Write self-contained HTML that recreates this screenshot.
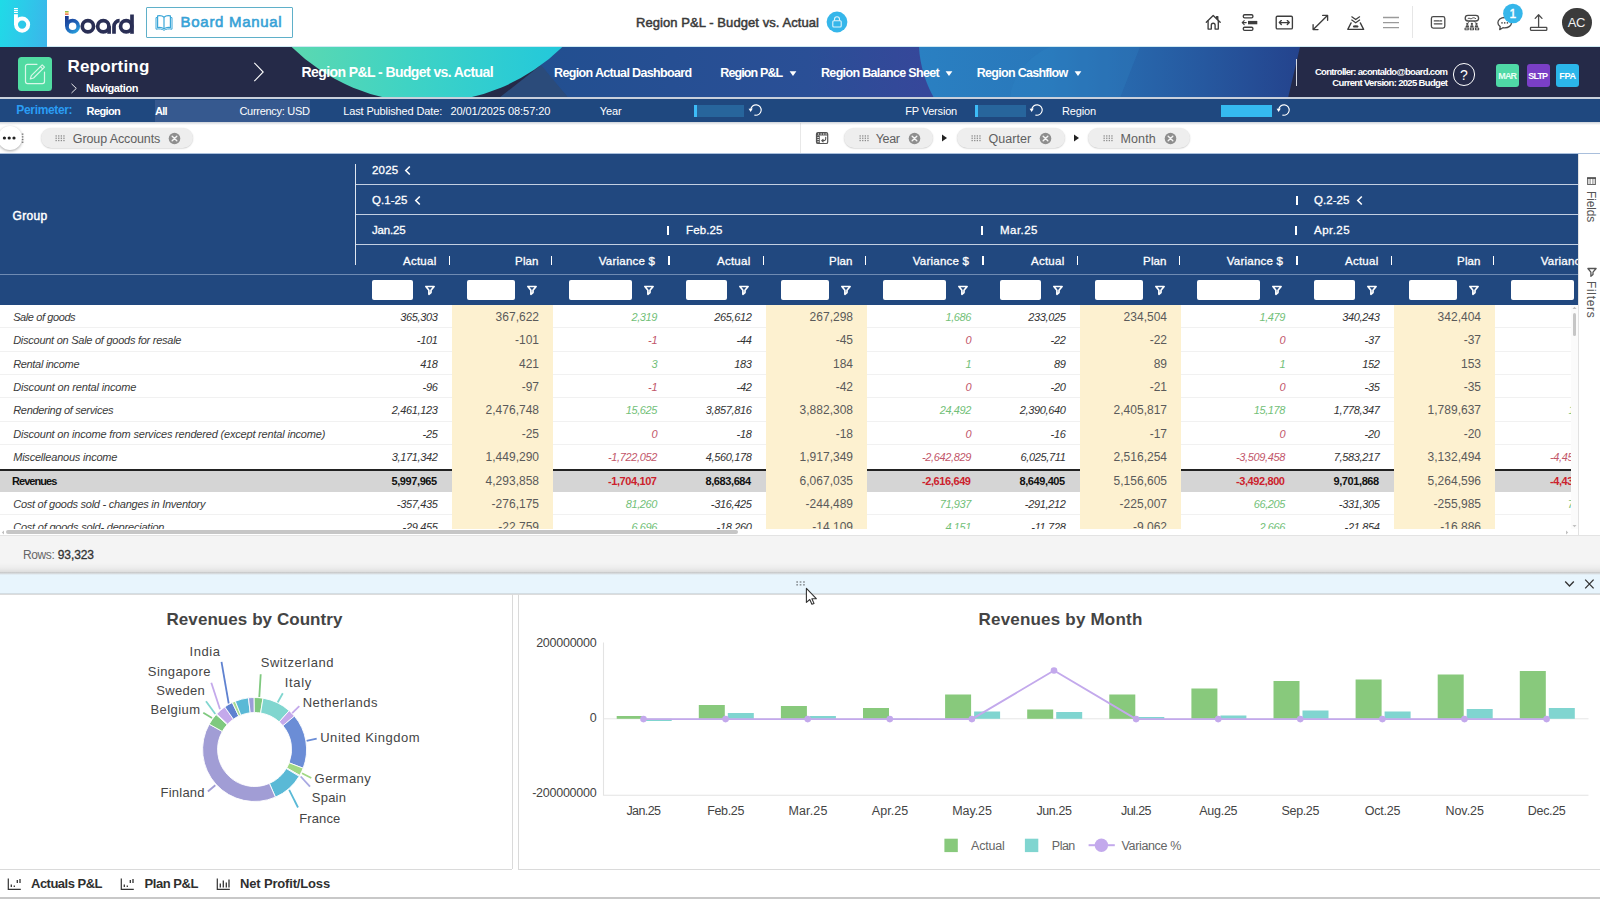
<!DOCTYPE html>
<html>
<head>
<meta charset="utf-8">
<title>Region P&amp;L - Budget vs. Actual</title>
<style>
*{box-sizing:border-box;margin:0;padding:0}
html,body{width:1600px;height:900px;overflow:hidden;background:#fff;font-family:"Liberation Sans",sans-serif;}
#root{position:relative;width:1600px;height:900px;overflow:hidden;background:#fff}
.abs{position:absolute}
.t{position:absolute;white-space:nowrap;line-height:1}
/* top bar */
#topbar{position:absolute;left:0;top:0;width:1600px;height:47px;background:#fff}
#logoSq{position:absolute;left:0;top:0;width:47px;height:47px;background:linear-gradient(100deg,#1fdbe7 0%,#2ccbe9 45%,#3cb4ea 100%)}
/* nav bar */
#nav{position:absolute;left:0;top:47px;width:1600px;height:51px;background:#252a48;overflow:hidden}
#navline{position:absolute;left:0;top:97px;width:1600px;height:2px;background:#c9d0dc}
/* perimeter */
#perim{position:absolute;left:0;top:99px;width:1600px;height:23px;background:#1f487f}
/* toolbar */
#toolbar{position:absolute;left:0;top:122px;width:1600px;height:32px;background:#fff}
/* table */
#thead{position:absolute;left:0;top:154px;width:1578px;height:150.600px;background:#21487f}
#tbody{position:absolute;left:0;top:305px;width:1578px;height:224px;background:#fff;overflow:hidden}
#side{position:absolute;left:1578px;top:154px;width:22px;height:382px;background:#fff}
#tfoot{position:absolute;left:0;top:536px;width:1600px;height:37px;background:#f4f4f4}
#divider{position:absolute;left:0;top:573px;width:1600px;height:21px;background:#e8f5fd}
#charts{position:absolute;left:0;top:594px;width:1600px;height:276px;background:#fff}
#tabs{position:absolute;left:0;top:870px;width:1600px;height:30px;background:#fff}
</style>
</head>
<body>
<div id="root">
<div id="topbar">
<div id="logoSq"></div>
<svg class="abs" style="left:0;top:0" width="47" height="47" viewBox="0 0 47 47">
<g fill="none" stroke="#fff" stroke-linecap="butt">
<circle cx="22.1" cy="24.6" r="6.1" stroke-width="3.9"/>
<path d="M15.95 14.2V25" stroke-width="3.9"/>
<path d="M14 8.6h3.9M14 10.6h3.9M14 12.5h3.9" stroke-width="1.1"/>
</g></svg>
<svg class="abs" style="left:60px;top:6px" width="80" height="34" viewBox="60 6 80 34">
<defs><linearGradient id="bg1" gradientUnits="userSpaceOnUse" x1="65" y1="15" x2="78" y2="34"><stop offset="0" stop-color="#1b2f86"/><stop offset="0.55" stop-color="#1f63b8"/><stop offset="1" stop-color="#2aaee6"/></linearGradient></defs>
<rect x="65" y="11" width="3.6" height="1.2" fill="#8cc152"/><rect x="65" y="12.4" width="3.6" height="1.1" fill="#f5b731"/><rect x="65" y="13.7" width="3.6" height="1.1" fill="#e9573f"/>
<g fill="none" stroke-width="3.7">
<path d="M66.85 16V26.3" stroke="url(#bg1)"/>
<circle cx="72.6" cy="26.3" r="5.65" stroke="url(#bg1)"/>
<circle cx="87.9" cy="26.3" r="5.65" stroke="#2a2f55"/>
<circle cx="103.3" cy="26.3" r="5.65" stroke="#2a2f55"/>
<path d="M109.1 26.3V33.8" stroke="#2a2f55"/>
<path d="M114 33.8V26.6a5.6 5.6 0 0 1 5.6-5.9" stroke="#2a2f55"/>
<circle cx="126.2" cy="26.3" r="5.65" stroke="#2a2f55"/>
<path d="M132 14.5V33.8" stroke="#2a2f55"/>
</g></svg>
<div class="abs" style="left:146px;top:6.5px;width:146.5px;height:31px;border:1.5px solid #5fb0c9;border-radius:1px;background:#fff"></div>
<svg class="abs" style="left:154px;top:13px" width="20" height="19" viewBox="0 0 20 19">
<g fill="none" stroke="#3aa6d8" stroke-width="1.2" stroke-linejoin="round">
<path d="M10 4.2C8.3 2.7 6 2.4 3.6 2.9V14.6C6 14.1 8.3 14.5 10 15.9C11.700 14.5 14 14.1 16.400 14.6V2.9C14 2.4 11.700 2.7 10 4.2Z"/>
<path d="M10 4.200V15.900"/>
<path d="M3.600 4.600H2V16.200C5 15.600 8 15.900 10 17.300C12 15.900 15 15.600 18 16.200V4.600H16.400" stroke-width="1"/>
</g></svg>
<span class="t" style="left:180.60px;top:14.00px;font-size:15px;color:#37a2d6;letter-spacing:0.699px;-webkit-text-stroke:0.600px #37a2d6;">Board Manual</span>
<span class="t" style="left:636.00px;top:16.00px;font-size:13px;color:#3a3a3a;letter-spacing:0.070px;-webkit-text-stroke:0.500px #3a3a3a;">Region P&amp;L - Budget vs. Actual</span>
<svg class="abs" style="left:826px;top:11px" width="22" height="22" viewBox="0 0 22 22">
<circle cx="11" cy="11" r="10.4" fill="#35b6ea"/>
<g fill="none" stroke="#dff4fc" stroke-width="1.1"><rect x="6.800" y="9.800" width="8.400" height="6.200" rx="1"/><path d="M8.500 9.800V8.200a2.500 2.500 0 0 1 5 0V9.800"/></g></svg>
<svg class="abs" style="left:1200px;top:8px" width="210" height="30" viewBox="1200 8 210 30">
<g fill="none" stroke="#3d3d3d" stroke-width="1.35" stroke-linejoin="round" stroke-linecap="round">
<!-- home -->
<path d="M1206.300 22.300L1213.200 15.400L1220.200 22.300"/><path d="M1208.100 21V29.100H1211.300V25.200a1.900 1.900 0 0 1 3.800 0V29.100H1218.300V21"/><path d="M1216.600 18.600V16.600H1217.800V19.800"/>
<!-- bars -->
<rect x="1243.300" y="14.700" width="9.600" height="3.200" rx="1.300"/><rect x="1243.300" y="27.200" width="9.600" height="3.200" rx="1.300"/>
<path d="M1248 22.600H1257.300" stroke-width="3.400" stroke-linecap="butt"/><path d="M1246.200 22.600H1242.200M1244.200 20.600L1242.200 22.600L1244.200 24.600" stroke-width="1.100"/>
<!-- box arrows -->
<rect x="1276.200" y="16.300" width="16.200" height="12.600" rx="1.200"/><path d="M1279.300 22.600H1289.300M1281.300 20.600L1279.300 22.600L1281.300 24.600M1287.300 20.600L1289.300 22.600L1287.300 24.600"/>
<!-- diag -->
<path d="M1313.300 29.400L1327.400 15.600M1322.700 15.400H1327.600V20.300M1313.100 24.700V29.600H1318"/>
<!-- layer -->
<path d="M1351.800 16.800L1355.700 19.600L1359.600 16.800M1351.800 20L1355.700 22.800L1359.600 20" stroke-width="1.200"/>
<path d="M1351.100 22.900L1347.800 29.400H1363.600L1360.300 22.900"/><ellipse cx="1355.700" cy="26.400" rx="2.900" ry="1.200" fill="#3d3d3d" stroke="none"/>
</g>
<g stroke="#9a9a9a" stroke-width="1.300"><path d="M1383 17.500H1399M1383 22.600H1399M1383 27.600H1399"/></g>
</svg>
<div class="abs" style="left:1412px;top:6px;width:1px;height:32px;background:#e6e6e6;"></div>
<svg class="abs" style="left:1425px;top:2px" width="130" height="36" viewBox="1425 2 130 36">
<g fill="none" stroke="#4a4a4a" stroke-width="1.300" stroke-linejoin="round" stroke-linecap="round">
<!-- card -->
<rect x="1431.400" y="16.700" width="13.400" height="11.400" rx="1.800"/><path d="M1434.300 20.900H1438.800M1440 20.900H1441.600M1434.300 23.800H1441.900" stroke-width="1.300"/>
<!-- people -->
<rect x="1465.200" y="15.400" width="13.400" height="5.600" rx="2.800"/><path d="M1468 18.500c1.300-1.400 2.500 1.100 3.800 0s2.500-.9 3.800 0" stroke-width="1"/>
<path d="M1469.600 21.200l-1.300 1.300M1474 21.200l1.300 1.300" stroke-width="0.900"/>
<g fill="#4a4a4a" stroke="none">
<circle cx="1467.300" cy="23.900" r="1.150"/><circle cx="1471.900" cy="23.900" r="1.150"/><circle cx="1476.500" cy="23.900" r="1.150"/>
<path d="M1465.300 27.500l.8-2.200h2.400l.8 2.200ZM1469.900 27.500l.8-2.200h2.400l.8 2.200ZM1474.500 27.500l.8-2.200h2.400l.8 2.200Z"/>
<rect x="1464.500" y="27.700" width="4.300" height="2.500" rx="0.400"/><rect x="1469.700" y="27.700" width="4.300" height="2.500" rx="0.400"/><rect x="1474.900" y="27.700" width="4.300" height="2.500" rx="0.400"/>
</g>
<g fill="#fff" stroke="none"><rect x="1465.600" y="28.500" width="2.100" height="0.900"/><rect x="1470.800" y="28.500" width="2.100" height="0.900"/><rect x="1476" y="28.500" width="2.100" height="0.900"/></g>
<!-- chat -->
<path d="M1504.700 17.500c-4 0-6.800 2.300-6.800 5.200c0 1.600.9 3 2.300 3.900l-.5 3.100l3.200-2c.6.100 1.200.2 1.800.2c3.900 0 6.800-2.300 6.800-5.200S1508.600 17.500 1504.700 17.500Z"/>
<!-- upload -->
<rect x="1530.500" y="27.400" width="16.300" height="2.900" rx="0.500"/><path d="M1538.600 26.500V15M1535.200 18.400L1538.600 14.800L1542 18.400"/>
</g>
<g fill="#4a4a4a"><circle cx="1502" cy="22.900" r="0.800"/><circle cx="1504.700" cy="22.900" r="0.800"/><circle cx="1507.400" cy="22.900" r="0.800"/></g>
<circle cx="1512.900" cy="13.500" r="9.800" fill="#35b6ea"/>
</svg>
<span class="t" style="left:1509.56px;top:8.00px;font-size:12px;color:#fff;-webkit-text-stroke:0.400px #fff;">1</span>
<div class="abs" style="left:1562px;top:7.500px;width:29.500px;height:29.500px;border-radius:50%;background:#3b3b3b"></div>
<span class="t" style="left:1567.83px;top:16.00px;font-size:13px;color:#f2f2f2;letter-spacing:-0.531px;">AC</span>
<div class="abs" style="left:47px;top:46px;width:1553px;height:1px;background:#cfeaf3;"></div>
</div>
<div id="nav">
<svg class="abs" style="left:0;top:0" width="1600" height="51" viewBox="0 47 1600 51">
<defs>
<linearGradient id="ng1" x1="0" y1="0" x2="1" y2="0"><stop offset="0" stop-color="#6adba6"/><stop offset="0.45" stop-color="#3fd3c4"/><stop offset="1" stop-color="#18c4e4"/></linearGradient>
<linearGradient id="ng2" gradientUnits="userSpaceOnUse" x1="535" y1="0" x2="925" y2="0"><stop offset="0" stop-color="#224f90"/><stop offset="0.7" stop-color="#2a4f96"/><stop offset="1" stop-color="#36479a"/></linearGradient>
<linearGradient id="ng3" x1="0" y1="0" x2="1" y2="0"><stop offset="0" stop-color="#2a80c2"/><stop offset="0.35" stop-color="#2977ba"/><stop offset="0.75" stop-color="#26589f"/><stop offset="1" stop-color="#24438d"/></linearGradient>
</defs>
<rect x="0" y="47" width="1600" height="51" fill="#252a48"/>
<path d="M535 47H940V98H568L538 64Z" fill="url(#ng2)"/>
<path d="M499 98L541 65L568.500 98Z" fill="#2b4b7a"/>
<path d="M919 47H1300L1288 98H934C926 84 920 66 919 47Z" fill="url(#ng3)"/>
<path d="M1010 98C1012 75 1030 55 1050 47H1140L1120 98Z" fill="#2e86c6" opacity="0.250"/>
<circle cx="427" cy="-90.600" r="193" fill="url(#ng1)"/>
</svg>
<div class="abs" style="left:18px;top:10px;width:34px;height:34px;border-radius:3.500px;background:#51dba2"></div>
<svg class="abs" style="left:18px;top:10px" width="34" height="34" viewBox="0 0 34 34">
<g fill="none" stroke="#d8f7e8" stroke-width="1.200" stroke-linejoin="round" stroke-linecap="round">
<path d="M19 7.300H9.500a2 2 0 0 0-2 2V24.600a2 2 0 0 0 2 2H24.500a2 2 0 0 0 2-2V15"/>
<path d="M24.200 7.800l2.300 2.300L15.600 21l-3.300 1l1-3.300Z"/><path d="M22.400 9.600l2.300 2.300"/>
</g></svg>
<span class="t" style="left:67.50px;top:11.00px;font-size:17px;color:#fff;font-weight:bold;letter-spacing:0.191px;">Reporting</span>
<span class="t" style="left:86.00px;top:36.00px;font-size:11px;color:#fff;font-weight:bold;letter-spacing:-0.423px;">Navigation</span>
<svg class="abs" style="left:68px;top:34px" width="12" height="14" viewBox="0 0 12 14"><path d="M3.500 2.800L8.300 7.400L3.500 12" fill="none" stroke="#fff" stroke-width="0.900"/></svg>
<svg class="abs" style="left:250px;top:12px" width="18" height="26" viewBox="0 0 18 26"><path d="M4.300 3.800L13.200 13L4.300 22.200" fill="none" stroke="#fff" stroke-width="1.100"/></svg>
<span class="t" style="left:301.60px;top:18.00px;font-size:14px;color:#fff;font-weight:bold;letter-spacing:-0.592px;">Region P&amp;L - Budget vs. Actual</span>
<span class="t" style="left:554.00px;top:20.00px;font-size:12.5px;color:#fff;font-weight:bold;letter-spacing:-0.641px;">Region Actual Dashboard</span>
<span class="t" style="left:720.30px;top:20.00px;font-size:12.5px;color:#fff;font-weight:bold;letter-spacing:-0.884px;">Region P&amp;L</span>
<span class="t" style="left:821.00px;top:20.00px;font-size:12.5px;color:#fff;font-weight:bold;letter-spacing:-0.665px;">Region Balance Sheet</span>
<span class="t" style="left:976.80px;top:20.00px;font-size:12.5px;color:#fff;font-weight:bold;letter-spacing:-0.714px;">Region Cashflow</span>
<svg class="abs" style="left:788.7px;top:22.5px" width="8" height="7" viewBox="0 0 8 7"><path d="M0.600 1.200H7.400L4 5.900Z" fill="#fff"/></svg>
<svg class="abs" style="left:944.8px;top:22.5px" width="8" height="7" viewBox="0 0 8 7"><path d="M0.600 1.200H7.400L4 5.900Z" fill="#fff"/></svg>
<svg class="abs" style="left:1074px;top:22.5px" width="8" height="7" viewBox="0 0 8 7"><path d="M0.600 1.200H7.400L4 5.900Z" fill="#fff"/></svg>
<div class="abs" style="left:1296px;top:12px;width:1.2px;height:27px;background:#d5d8e2;"></div>
<span class="t" style="left:1314.91px;top:20.00px;font-size:9.5px;color:#fff;font-weight:bold;letter-spacing:-0.693px;">Controller: acontaldo@board.com</span>
<span class="t" style="left:1332.34px;top:31.00px;font-size:9.5px;color:#fff;font-weight:bold;letter-spacing:-0.663px;">Current Version: 2025 Budget</span>
<div class="abs" style="left:1452.600px;top:16.200px;width:22.800px;height:22.800px;border-radius:50%;border:1.200px solid #fff"></div>
<span class="t" style="left:1460.10px;top:21.00px;font-size:14px;color:#fff;">?</span>
<div class="abs" style="left:1496px;top:16.600px;width:23.300px;height:23px;border-radius:3px;background:#4fd9a6"></div>
<span class="t" style="left:1498.37px;top:25.00px;font-size:9px;color:#e6fff3;font-weight:bold;letter-spacing:-0.967px;">MAR</span>
<div class="abs" style="left:1526.5px;top:16.600px;width:23.300px;height:23px;border-radius:3px;background:#7a3fc6"></div>
<span class="t" style="left:1528.19px;top:25.00px;font-size:9px;color:#fff;font-weight:bold;letter-spacing:-0.811px;">SLTP</span>
<div class="abs" style="left:1556px;top:16.600px;width:23.300px;height:23px;border-radius:3px;background:#2bb6ea"></div>
<span class="t" style="left:1559.23px;top:25.00px;font-size:9px;color:#fff;font-weight:bold;letter-spacing:-0.248px;">FPA</span>
</div>
<div id="navline"></div>
<div id="perim">
<div class="abs" style="left:154.5px;top:0.5px;width:155.5px;height:22px;background:#36598f;"></div>
<span class="t" style="left:16.30px;top:5.00px;font-size:12px;color:#2a9df4;font-weight:bold;letter-spacing:-0.338px;">Perimeter:</span>
<span class="t" style="left:86.60px;top:7.00px;font-size:11px;color:#fff;font-weight:bold;letter-spacing:-0.614px;">Region</span>
<span class="t" style="left:155.00px;top:7.00px;font-size:11px;color:#fff;font-weight:bold;letter-spacing:-0.754px;">All</span>
<span class="t" style="left:239.40px;top:7.00px;font-size:11px;color:#fff;letter-spacing:-0.282px;">Currency: USD</span>
<span class="t" style="left:343.20px;top:7.00px;font-size:11px;color:#fff;letter-spacing:-0.126px;">Last Published Date:</span>
<span class="t" style="left:450.40px;top:7.00px;font-size:11px;color:#fff;letter-spacing:-0.049px;">20/01/2025 08:57:20</span>
<span class="t" style="left:599.70px;top:7.00px;font-size:11px;color:#fff;letter-spacing:-0.059px;">Year</span>
<span class="t" style="left:905.30px;top:7.00px;font-size:11px;color:#fff;letter-spacing:-0.191px;">FP Version</span>
<span class="t" style="left:1062.00px;top:7.00px;font-size:11px;color:#fff;letter-spacing:-0.143px;">Region</span>
<div class="abs" style="left:693.7px;top:5.6px;width:50.5px;height:12.2px;background:#27659c;"></div>
<div class="abs" style="left:693.7px;top:5.6px;width:3.3px;height:12.2px;background:#3dbcf8;"></div>
<div class="abs" style="left:974.6px;top:5.6px;width:51.4px;height:12.2px;background:#27659c;"></div>
<div class="abs" style="left:974.6px;top:5.6px;width:3.3px;height:12.2px;background:#3dbcf8;"></div>
<div class="abs" style="left:1220.8px;top:5.6px;width:51.4px;height:12.2px;background:#35baf0;"></div>
<svg class="abs" style="left:748px;top:3.299999999999997px" width="16" height="16" viewBox="-8 -8 16 16"><path d="M-5.200 -0.300A5.200 5.200 0 1 1 -1.200 5.100" fill="none" stroke="#fff" stroke-width="1.100" stroke-linecap="round"/><path d="M-7.400 -1.200L-3.200 -1.600L-5.400 1.900Z" fill="#fff"/></svg>
<svg class="abs" style="left:1029.4px;top:3.299999999999997px" width="16" height="16" viewBox="-8 -8 16 16"><path d="M-5.200 -0.300A5.200 5.200 0 1 1 -1.200 5.100" fill="none" stroke="#fff" stroke-width="1.100" stroke-linecap="round"/><path d="M-7.400 -1.200L-3.200 -1.600L-5.400 1.900Z" fill="#fff"/></svg>
<svg class="abs" style="left:1276px;top:3.299999999999997px" width="16" height="16" viewBox="-8 -8 16 16"><path d="M-5.200 -0.300A5.200 5.200 0 1 1 -1.200 5.100" fill="none" stroke="#fff" stroke-width="1.100" stroke-linecap="round"/><path d="M-7.400 -1.200L-3.200 -1.600L-5.400 1.900Z" fill="#fff"/></svg>
</div>
<div id="toolbar">
<div class="abs" style="left:41.2px;top:6.300000000000011px;width:151.8px;height:19.800px;border-radius:10px;background:#eeeeee;box-shadow:0 0.500px 1.500px rgba(0,0,0,0.220)"></div>
<svg class="abs" style="left:55.0px;top:12.699999999999989px" width="11" height="7" viewBox="0 0 11 7"><g fill="#8a8a8a"><rect x="0.5" y="0.3" width="1.300" height="1.300"/><rect x="3.1" y="0.3" width="1.300" height="1.300"/><rect x="5.7" y="0.3" width="1.300" height="1.300"/><rect x="8.3" y="0.3" width="1.300" height="1.300"/><rect x="0.5" y="2.6" width="1.300" height="1.300"/><rect x="3.1" y="2.6" width="1.300" height="1.300"/><rect x="5.7" y="2.6" width="1.300" height="1.300"/><rect x="8.3" y="2.6" width="1.300" height="1.300"/><rect x="0.5" y="4.9" width="1.300" height="1.300"/><rect x="3.1" y="4.9" width="1.300" height="1.300"/><rect x="5.7" y="4.9" width="1.300" height="1.300"/><rect x="8.3" y="4.9" width="1.300" height="1.300"/></g></svg>
<span class="t" style="left:72.80px;top:11.00px;font-size:12.5px;color:#606060;letter-spacing:-0.111px;">Group Accounts</span>
<svg class="abs" style="left:167.8px;top:9.699999999999989px" width="13" height="13" viewBox="-6.500 -6.500 13 13"><circle r="5.800" fill="#8e8e8e"/><path d="M-2.300 -2.300L2.300 2.300M2.300 -2.300L-2.300 2.300" stroke="#f4f4f4" stroke-width="1.400" stroke-linecap="round"/></svg>
<div class="abs" style="left:799.5px;top:1px;width:1px;height:31px;background:#e8e8e8;"></div>
<div class="abs" style="left:-2.500px;top:3.800px;width:24.500px;height:24.500px;border-radius:50%;background:#fff;box-shadow:0 1px 3px rgba(0,0,0,0.350)"></div>
<svg class="abs" style="left:2px;top:12px" width="16" height="8" viewBox="0 0 16 8"><g fill="#222"><circle cx="2.400" cy="4" r="1.600"/><circle cx="7.200" cy="4" r="1.600"/><circle cx="12" cy="4" r="1.600"/></g></svg>
<svg class="abs" style="left:21px;top:11px" width="4" height="11" viewBox="0 0 4 11"><g fill="#777"><rect x="0.800" y="0.500" width="1.600" height="1.300"/><rect x="0.800" y="3.200" width="1.600" height="1.300"/><rect x="0.800" y="5.900" width="1.600" height="1.300"/><rect x="0.800" y="8.600" width="1.600" height="1.300"/></g></svg>
<svg class="abs" style="left:815px;top:9px" width="14" height="14" viewBox="815 131 14 14"><rect x="816.500" y="132.500" width="11.200" height="11" rx="1.600" fill="#fff" stroke="#555" stroke-width="1.200"/>
<path d="M816.500 134.200a1.700 1.700 0 0 1 1.700-1.700h7.800a1.700 1.700 0 0 1 1.700 1.700v1.300h-11.200Z" fill="#555"/>
<path d="M816.500 135.500h3.300v8h-1.600a1.700 1.700 0 0 1-1.700-1.700Z" fill="#555"/>
<g fill="#fff"><rect x="818" y="133.500" width="1" height="1"/><rect x="820.500" y="133.500" width="1.300" height="1"/><rect x="823" y="133.500" width="1.300" height="1"/><rect x="825.500" y="133.500" width="1.300" height="1"/>
<rect x="817.300" y="137" width="1.800" height="0.800"/><rect x="817.300" y="139.200" width="1.800" height="0.800"/><rect x="817.300" y="141.400" width="1.800" height="0.800"/></g>
<path d="M825.700 137.300v1.500a1.800 1.800 0 0 1-1.800 1.800h-2.100M823.100 139.300l-1.400 1.300l1.400 1.300" fill="none" stroke="#555" stroke-width="1.100" stroke-linecap="round" stroke-linejoin="round"/></svg>
<div class="abs" style="left:843.8px;top:6.300000000000011px;width:89.70000000000005px;height:19.800px;border-radius:10px;background:#eeeeee;box-shadow:0 0.500px 1.500px rgba(0,0,0,0.220)"></div>
<svg class="abs" style="left:858.5px;top:12.699999999999989px" width="11" height="7" viewBox="0 0 11 7"><g fill="#8a8a8a"><rect x="0.5" y="0.3" width="1.300" height="1.300"/><rect x="3.1" y="0.3" width="1.300" height="1.300"/><rect x="5.7" y="0.3" width="1.300" height="1.300"/><rect x="8.3" y="0.3" width="1.300" height="1.300"/><rect x="0.5" y="2.6" width="1.300" height="1.300"/><rect x="3.1" y="2.6" width="1.300" height="1.300"/><rect x="5.7" y="2.6" width="1.300" height="1.300"/><rect x="8.3" y="2.6" width="1.300" height="1.300"/><rect x="0.5" y="4.9" width="1.300" height="1.300"/><rect x="3.1" y="4.9" width="1.300" height="1.300"/><rect x="5.7" y="4.9" width="1.300" height="1.300"/><rect x="8.3" y="4.9" width="1.300" height="1.300"/></g></svg>
<span class="t" style="left:875.70px;top:11.00px;font-size:12.5px;color:#606060;letter-spacing:-0.316px;">Year</span>
<svg class="abs" style="left:907.7px;top:9.699999999999989px" width="13" height="13" viewBox="-6.500 -6.500 13 13"><circle r="5.800" fill="#8e8e8e"/><path d="M-2.300 -2.300L2.300 2.300M2.300 -2.300L-2.300 2.300" stroke="#f4f4f4" stroke-width="1.400" stroke-linecap="round"/></svg>
<div class="abs" style="left:956.8px;top:6.300000000000011px;width:107.79999999999995px;height:19.800px;border-radius:10px;background:#eeeeee;box-shadow:0 0.500px 1.500px rgba(0,0,0,0.220)"></div>
<svg class="abs" style="left:970.9px;top:12.699999999999989px" width="11" height="7" viewBox="0 0 11 7"><g fill="#8a8a8a"><rect x="0.5" y="0.3" width="1.300" height="1.300"/><rect x="3.1" y="0.3" width="1.300" height="1.300"/><rect x="5.7" y="0.3" width="1.300" height="1.300"/><rect x="8.3" y="0.3" width="1.300" height="1.300"/><rect x="0.5" y="2.6" width="1.300" height="1.300"/><rect x="3.1" y="2.6" width="1.300" height="1.300"/><rect x="5.7" y="2.6" width="1.300" height="1.300"/><rect x="8.3" y="2.6" width="1.300" height="1.300"/><rect x="0.5" y="4.9" width="1.300" height="1.300"/><rect x="3.1" y="4.9" width="1.300" height="1.300"/><rect x="5.7" y="4.9" width="1.300" height="1.300"/><rect x="8.3" y="4.9" width="1.300" height="1.300"/></g></svg>
<span class="t" style="left:988.50px;top:11.00px;font-size:12.5px;color:#606060;letter-spacing:0.030px;">Quarter</span>
<svg class="abs" style="left:1039.2px;top:9.699999999999989px" width="13" height="13" viewBox="-6.500 -6.500 13 13"><circle r="5.800" fill="#8e8e8e"/><path d="M-2.300 -2.300L2.300 2.300M2.300 -2.300L-2.300 2.300" stroke="#f4f4f4" stroke-width="1.400" stroke-linecap="round"/></svg>
<div class="abs" style="left:1088px;top:6.300000000000011px;width:101.79999999999995px;height:19.800px;border-radius:10px;background:#eeeeee;box-shadow:0 0.500px 1.500px rgba(0,0,0,0.220)"></div>
<svg class="abs" style="left:1102.5px;top:12.699999999999989px" width="11" height="7" viewBox="0 0 11 7"><g fill="#8a8a8a"><rect x="0.5" y="0.3" width="1.300" height="1.300"/><rect x="3.1" y="0.3" width="1.300" height="1.300"/><rect x="5.7" y="0.3" width="1.300" height="1.300"/><rect x="8.3" y="0.3" width="1.300" height="1.300"/><rect x="0.5" y="2.6" width="1.300" height="1.300"/><rect x="3.1" y="2.6" width="1.300" height="1.300"/><rect x="5.7" y="2.6" width="1.300" height="1.300"/><rect x="8.3" y="2.6" width="1.300" height="1.300"/><rect x="0.5" y="4.9" width="1.300" height="1.300"/><rect x="3.1" y="4.9" width="1.300" height="1.300"/><rect x="5.7" y="4.9" width="1.300" height="1.300"/><rect x="8.3" y="4.9" width="1.300" height="1.300"/></g></svg>
<span class="t" style="left:1120.50px;top:11.00px;font-size:12.5px;color:#606060;letter-spacing:0.110px;">Month</span>
<svg class="abs" style="left:1164.0px;top:9.699999999999989px" width="13" height="13" viewBox="-6.500 -6.500 13 13"><circle r="5.800" fill="#8e8e8e"/><path d="M-2.300 -2.300L2.300 2.300M2.300 -2.300L-2.300 2.300" stroke="#f4f4f4" stroke-width="1.400" stroke-linecap="round"/></svg>
<svg class="abs" style="left:941.1px;top:12px" width="7" height="8" viewBox="0 0 7 8"><path d="M1 0.600L6 4L1 7.400Z" fill="#222"/></svg>
<svg class="abs" style="left:1072.7px;top:12px" width="7" height="8" viewBox="0 0 7 8"><path d="M1 0.600L6 4L1 7.400Z" fill="#222"/></svg>
<div class="abs" style="left:0;top:0;width:1600px;height:2.500px;background:linear-gradient(rgba(30,50,80,0.220),rgba(30,50,80,0))"></div>
<div class="abs" style="left:0px;top:31.4px;width:1600px;height:0.6px;background:#a9bfdc;"></div>
</div>
<div id="thead">
<div class="abs" style="left:355px;top:10px;width:1.2px;height:101px;background:#dfe6f0;"></div>
<div class="abs" style="left:356px;top:30px;width:1222px;height:1px;background:#c3cfe2;"></div>
<div class="abs" style="left:356px;top:60px;width:1222px;height:1px;background:#c3cfe2;"></div>
<div class="abs" style="left:356px;top:90px;width:1222px;height:1px;background:#c3cfe2;"></div>
<div class="abs" style="left:0px;top:120px;width:1578px;height:1px;background:#6f8bb3;"></div>
<span class="t" style="left:12.50px;top:56.00px;font-size:12px;color:#fff;letter-spacing:0.328px;-webkit-text-stroke:0.450px #fff;">Group</span>
<span class="t" style="left:372.00px;top:11.00px;font-size:11.5px;color:#fff;letter-spacing:0.202px;-webkit-text-stroke:0.300px #fff;">2025</span>
<svg class="abs" style="left:403px;top:10.500px" width="9" height="11" viewBox="0 0 9 11"><path d="M6.800 1.500L2.800 5.500L6.800 9.500" fill="none" stroke="#fff" stroke-width="1.600"/></svg>
<span class="t" style="left:372.00px;top:41.00px;font-size:11.5px;color:#fff;letter-spacing:0.038px;-webkit-text-stroke:0.300px #fff;">Q.1-25</span>
<svg class="abs" style="left:412.500px;top:40.500px" width="9" height="11" viewBox="0 0 9 11"><path d="M6.800 1.500L2.800 5.500L6.800 9.500" fill="none" stroke="#fff" stroke-width="1.600"/></svg>
<span class="t" style="left:1314.00px;top:41.00px;font-size:11.5px;color:#fff;letter-spacing:0.038px;-webkit-text-stroke:0.300px #fff;">Q.2-25</span>
<svg class="abs" style="left:1354.500px;top:40.500px" width="9" height="11" viewBox="0 0 9 11"><path d="M6.800 1.500L2.800 5.500L6.800 9.500" fill="none" stroke="#fff" stroke-width="1.600"/></svg>
<div class="abs" style="left:1296.3px;top:42px;width:1.6px;height:8.5px;background:#fff;"></div>
<span class="t" style="left:372.00px;top:71.00px;font-size:11.5px;color:#fff;letter-spacing:-0.172px;-webkit-text-stroke:0.300px #fff;">Jan.25</span>
<span class="t" style="left:402.96px;top:102.00px;font-size:11.5px;color:#fff;letter-spacing:0.255px;-webkit-text-stroke:0.300px #fff;">Actual</span>
<span class="t" style="left:515.12px;top:102.00px;font-size:11.5px;color:#fff;letter-spacing:0.117px;-webkit-text-stroke:0.300px #fff;">Plan</span>
<span class="t" style="left:598.74px;top:102.00px;font-size:11.5px;color:#fff;letter-spacing:0.236px;-webkit-text-stroke:0.300px #fff;">Variance $</span>
<div class="abs" style="left:448.8px;top:102px;width:1.6px;height:8.5px;background:#fff;"></div>
<div class="abs" style="left:550.7px;top:102px;width:1.6px;height:8.5px;background:#fff;"></div>
<div class="abs" style="left:668.2px;top:102px;width:1.6px;height:8.5px;background:#fff;"></div>
<div class="abs" style="left:372px;top:126px;width:40.69999999999999px;height:19.600px;background:#fff;border-radius:2px"></div>
<svg class="abs" style="left:424px;top:129.60000000000002px" width="12" height="12" viewBox="-6 -6 12 12"><path d="M-4.100 -3.500H4.100L1 0.200V2.600L-1.100 4.300V0.200Z" fill="none" stroke="#fff" stroke-width="1.700" stroke-linejoin="round"/></svg>
<div class="abs" style="left:466.5px;top:126px;width:48.5px;height:19.600px;background:#fff;border-radius:2px"></div>
<svg class="abs" style="left:526px;top:129.60000000000002px" width="12" height="12" viewBox="-6 -6 12 12"><path d="M-4.100 -3.500H4.100L1 0.200V2.600L-1.100 4.300V0.200Z" fill="none" stroke="#fff" stroke-width="1.700" stroke-linejoin="round"/></svg>
<div class="abs" style="left:569px;top:126px;width:63px;height:19.600px;background:#fff;border-radius:2px"></div>
<svg class="abs" style="left:643.4px;top:129.60000000000002px" width="12" height="12" viewBox="-6 -6 12 12"><path d="M-4.100 -3.500H4.100L1 0.200V2.600L-1.100 4.300V0.200Z" fill="none" stroke="#fff" stroke-width="1.700" stroke-linejoin="round"/></svg>
<span class="t" style="left:686.00px;top:71.00px;font-size:11.5px;color:#fff;letter-spacing:0.115px;-webkit-text-stroke:0.300px #fff;">Feb.25</span>
<div class="abs" style="left:667.0999999999999px;top:72px;width:1.6px;height:8.5px;background:#fff;"></div>
<span class="t" style="left:716.96px;top:102.00px;font-size:11.5px;color:#fff;letter-spacing:0.255px;-webkit-text-stroke:0.300px #fff;">Actual</span>
<span class="t" style="left:829.12px;top:102.00px;font-size:11.5px;color:#fff;letter-spacing:0.117px;-webkit-text-stroke:0.300px #fff;">Plan</span>
<span class="t" style="left:912.74px;top:102.00px;font-size:11.5px;color:#fff;letter-spacing:0.236px;-webkit-text-stroke:0.300px #fff;">Variance $</span>
<div class="abs" style="left:762.8000000000001px;top:102px;width:1.6px;height:8.5px;background:#fff;"></div>
<div class="abs" style="left:864.7px;top:102px;width:1.6px;height:8.5px;background:#fff;"></div>
<div class="abs" style="left:982.2px;top:102px;width:1.6px;height:8.5px;background:#fff;"></div>
<div class="abs" style="left:686px;top:126px;width:40.69999999999999px;height:19.600px;background:#fff;border-radius:2px"></div>
<svg class="abs" style="left:738px;top:129.60000000000002px" width="12" height="12" viewBox="-6 -6 12 12"><path d="M-4.100 -3.500H4.100L1 0.200V2.600L-1.100 4.300V0.200Z" fill="none" stroke="#fff" stroke-width="1.700" stroke-linejoin="round"/></svg>
<div class="abs" style="left:780.5px;top:126px;width:48.5px;height:19.600px;background:#fff;border-radius:2px"></div>
<svg class="abs" style="left:840px;top:129.60000000000002px" width="12" height="12" viewBox="-6 -6 12 12"><path d="M-4.100 -3.500H4.100L1 0.200V2.600L-1.100 4.300V0.200Z" fill="none" stroke="#fff" stroke-width="1.700" stroke-linejoin="round"/></svg>
<div class="abs" style="left:883px;top:126px;width:63px;height:19.600px;background:#fff;border-radius:2px"></div>
<svg class="abs" style="left:957.4000000000001px;top:129.60000000000002px" width="12" height="12" viewBox="-6 -6 12 12"><path d="M-4.100 -3.500H4.100L1 0.200V2.600L-1.100 4.300V0.200Z" fill="none" stroke="#fff" stroke-width="1.700" stroke-linejoin="round"/></svg>
<span class="t" style="left:1000.00px;top:71.00px;font-size:11.5px;color:#fff;letter-spacing:0.471px;-webkit-text-stroke:0.300px #fff;">Mar.25</span>
<div class="abs" style="left:981.0999999999999px;top:72px;width:1.6px;height:8.5px;background:#fff;"></div>
<span class="t" style="left:1030.96px;top:102.00px;font-size:11.5px;color:#fff;letter-spacing:0.255px;-webkit-text-stroke:0.300px #fff;">Actual</span>
<span class="t" style="left:1143.12px;top:102.00px;font-size:11.5px;color:#fff;letter-spacing:0.117px;-webkit-text-stroke:0.300px #fff;">Plan</span>
<span class="t" style="left:1226.74px;top:102.00px;font-size:11.5px;color:#fff;letter-spacing:0.236px;-webkit-text-stroke:0.300px #fff;">Variance $</span>
<div class="abs" style="left:1076.8px;top:102px;width:1.6px;height:8.5px;background:#fff;"></div>
<div class="abs" style="left:1178.7px;top:102px;width:1.6px;height:8.5px;background:#fff;"></div>
<div class="abs" style="left:1296.2px;top:102px;width:1.6px;height:8.5px;background:#fff;"></div>
<div class="abs" style="left:1000px;top:126px;width:40.69999999999999px;height:19.600px;background:#fff;border-radius:2px"></div>
<svg class="abs" style="left:1052px;top:129.60000000000002px" width="12" height="12" viewBox="-6 -6 12 12"><path d="M-4.100 -3.500H4.100L1 0.200V2.600L-1.100 4.300V0.200Z" fill="none" stroke="#fff" stroke-width="1.700" stroke-linejoin="round"/></svg>
<div class="abs" style="left:1094.5px;top:126px;width:48.5px;height:19.600px;background:#fff;border-radius:2px"></div>
<svg class="abs" style="left:1154px;top:129.60000000000002px" width="12" height="12" viewBox="-6 -6 12 12"><path d="M-4.100 -3.500H4.100L1 0.200V2.600L-1.100 4.300V0.200Z" fill="none" stroke="#fff" stroke-width="1.700" stroke-linejoin="round"/></svg>
<div class="abs" style="left:1197px;top:126px;width:63px;height:19.600px;background:#fff;border-radius:2px"></div>
<svg class="abs" style="left:1271.4px;top:129.60000000000002px" width="12" height="12" viewBox="-6 -6 12 12"><path d="M-4.100 -3.500H4.100L1 0.200V2.600L-1.100 4.300V0.200Z" fill="none" stroke="#fff" stroke-width="1.700" stroke-linejoin="round"/></svg>
<span class="t" style="left:1314.00px;top:71.00px;font-size:11.5px;color:#fff;letter-spacing:0.458px;-webkit-text-stroke:0.300px #fff;">Apr.25</span>
<div class="abs" style="left:1295.1px;top:72px;width:1.6px;height:8.5px;background:#fff;"></div>
<span class="t" style="left:1344.96px;top:102.00px;font-size:11.5px;color:#fff;letter-spacing:0.255px;-webkit-text-stroke:0.300px #fff;">Actual</span>
<span class="t" style="left:1457.12px;top:102.00px;font-size:11.5px;color:#fff;letter-spacing:0.117px;-webkit-text-stroke:0.300px #fff;">Plan</span>
<span class="t" style="left:1540.74px;top:102.00px;font-size:11.5px;color:#fff;letter-spacing:0.236px;-webkit-text-stroke:0.300px #fff;">Variance $</span>
<div class="abs" style="left:1390.8px;top:102px;width:1.6px;height:8.5px;background:#fff;"></div>
<div class="abs" style="left:1492.7px;top:102px;width:1.6px;height:8.5px;background:#fff;"></div>
<div class="abs" style="left:1610.2px;top:102px;width:1.6px;height:8.5px;background:#fff;"></div>
<div class="abs" style="left:1314px;top:126px;width:40.69999999999999px;height:19.600px;background:#fff;border-radius:2px"></div>
<svg class="abs" style="left:1366px;top:129.60000000000002px" width="12" height="12" viewBox="-6 -6 12 12"><path d="M-4.100 -3.500H4.100L1 0.200V2.600L-1.100 4.300V0.200Z" fill="none" stroke="#fff" stroke-width="1.700" stroke-linejoin="round"/></svg>
<div class="abs" style="left:1408.5px;top:126px;width:48.5px;height:19.600px;background:#fff;border-radius:2px"></div>
<svg class="abs" style="left:1468px;top:129.60000000000002px" width="12" height="12" viewBox="-6 -6 12 12"><path d="M-4.100 -3.500H4.100L1 0.200V2.600L-1.100 4.300V0.200Z" fill="none" stroke="#fff" stroke-width="1.700" stroke-linejoin="round"/></svg>
<div class="abs" style="left:1511px;top:126px;width:63px;height:19.600px;background:#fff;border-radius:2px"></div>
<svg class="abs" style="left:1585.4px;top:129.60000000000002px" width="12" height="12" viewBox="-6 -6 12 12"><path d="M-4.100 -3.500H4.100L1 0.200V2.600L-1.100 4.300V0.200Z" fill="none" stroke="#fff" stroke-width="1.700" stroke-linejoin="round"/></svg>
</div>
<div id="tbody">
<div class="abs" style="left:0;top:0;width:1571px;height:224px;overflow:hidden">
<div class="abs" style="left:0px;top:22.2px;width:1571px;height:1px;background:#f1f1f1;"></div>
<div class="abs" style="left:0px;top:45.6px;width:1571px;height:1px;background:#f1f1f1;"></div>
<div class="abs" style="left:0px;top:68.99999999999999px;width:1571px;height:1px;background:#f1f1f1;"></div>
<div class="abs" style="left:0px;top:92.39999999999999px;width:1571px;height:1px;background:#f1f1f1;"></div>
<div class="abs" style="left:0px;top:115.8px;width:1571px;height:1px;background:#f1f1f1;"></div>
<div class="abs" style="left:0px;top:139.19999999999996px;width:1571px;height:1px;background:#f1f1f1;"></div>
<div class="abs" style="left:0px;top:209.39999999999998px;width:1571px;height:1px;background:#f1f1f1;"></div>
<div class="abs" style="left:0px;top:164.09999999999997px;width:1571px;height:1.8px;background:#222;"></div>
<div class="abs" style="left:0px;top:165.89999999999998px;width:1571px;height:20.9px;background:#d5d5d5;"></div>
<div class="abs" style="left:451.8px;top:0px;width:101.4px;height:224px;background:#fdf1d0;"></div>
<div class="abs" style="left:765.8px;top:0px;width:101.4px;height:224px;background:#fdf1d0;"></div>
<div class="abs" style="left:1079.8px;top:0px;width:101.4px;height:224px;background:#fdf1d0;"></div>
<div class="abs" style="left:1393.8px;top:0px;width:101.4px;height:224px;background:#fdf1d0;"></div>
<span class="t" style="left:13.20px;top:7.00px;font-size:11px;color:#3a3a3a;font-style:italic;letter-spacing:-0.406px;">Sale of goods</span>
<span class="t" style="left:400.25px;top:7.00px;font-size:11px;color:#333;font-style:italic;letter-spacing:-0.369px;">365,303</span>
<span class="t" style="left:495.61px;top:6.00px;font-size:12px;color:#5a5a5a;">367,622</span>
<span class="t" style="left:631.40px;top:7.00px;font-size:11px;color:#72bf78;font-style:italic;letter-spacing:-0.358px;">2,319</span>
<span class="t" style="left:714.25px;top:7.00px;font-size:11px;color:#333;font-style:italic;letter-spacing:-0.369px;">265,612</span>
<span class="t" style="left:809.61px;top:6.00px;font-size:12px;color:#5a5a5a;">267,298</span>
<span class="t" style="left:945.40px;top:7.00px;font-size:11px;color:#72bf78;font-style:italic;letter-spacing:-0.358px;">1,686</span>
<span class="t" style="left:1028.25px;top:7.00px;font-size:11px;color:#333;font-style:italic;letter-spacing:-0.369px;">233,025</span>
<span class="t" style="left:1123.61px;top:6.00px;font-size:12px;color:#5a5a5a;">234,504</span>
<span class="t" style="left:1259.40px;top:7.00px;font-size:11px;color:#72bf78;font-style:italic;letter-spacing:-0.358px;">1,479</span>
<span class="t" style="left:1342.25px;top:7.00px;font-size:11px;color:#333;font-style:italic;letter-spacing:-0.369px;">340,243</span>
<span class="t" style="left:1437.61px;top:6.00px;font-size:12px;color:#5a5a5a;">342,404</span>
<span class="t" style="left:1573.40px;top:7.00px;font-size:11px;color:#72bf78;font-style:italic;letter-spacing:-0.358px;">2,161</span>
<span class="t" style="left:13.20px;top:30.00px;font-size:11px;color:#3a3a3a;font-style:italic;letter-spacing:-0.259px;">Discount on Sale of goods for resale</span>
<span class="t" style="left:416.84px;top:30.00px;font-size:11px;color:#333;font-style:italic;letter-spacing:-0.358px;">-101</span>
<span class="t" style="left:514.97px;top:29.00px;font-size:12px;color:#5a5a5a;">-101</span>
<span class="t" style="left:648.04px;top:30.00px;font-size:11px;color:#c2566a;font-style:italic;letter-spacing:-0.318px;">-1</span>
<span class="t" style="left:736.58px;top:30.00px;font-size:11px;color:#333;font-style:italic;letter-spacing:-0.345px;">-44</span>
<span class="t" style="left:835.66px;top:29.00px;font-size:12px;color:#5a5a5a;">-45</span>
<span class="t" style="left:965.38px;top:30.00px;font-size:11px;color:#c2566a;font-style:italic;letter-spacing:-0.398px;">0</span>
<span class="t" style="left:1050.58px;top:30.00px;font-size:11px;color:#333;font-style:italic;letter-spacing:-0.345px;">-22</span>
<span class="t" style="left:1149.66px;top:29.00px;font-size:12px;color:#5a5a5a;">-22</span>
<span class="t" style="left:1279.38px;top:30.00px;font-size:11px;color:#c2566a;font-style:italic;letter-spacing:-0.398px;">0</span>
<span class="t" style="left:1364.58px;top:30.00px;font-size:11px;color:#333;font-style:italic;letter-spacing:-0.345px;">-37</span>
<span class="t" style="left:1463.66px;top:29.00px;font-size:12px;color:#5a5a5a;">-37</span>
<span class="t" style="left:1593.38px;top:30.00px;font-size:11px;color:#c2566a;font-style:italic;letter-spacing:-0.398px;">0</span>
<span class="t" style="left:13.20px;top:54.00px;font-size:11px;color:#3a3a3a;font-style:italic;letter-spacing:-0.333px;">Rental income</span>
<span class="t" style="left:420.24px;top:54.00px;font-size:11px;color:#333;font-style:italic;letter-spacing:-0.398px;">418</span>
<span class="t" style="left:518.97px;top:53.00px;font-size:12px;color:#5a5a5a;">421</span>
<span class="t" style="left:651.38px;top:54.00px;font-size:11px;color:#72bf78;font-style:italic;letter-spacing:-0.398px;">3</span>
<span class="t" style="left:734.24px;top:54.00px;font-size:11px;color:#333;font-style:italic;letter-spacing:-0.398px;">183</span>
<span class="t" style="left:832.97px;top:53.00px;font-size:12px;color:#5a5a5a;">184</span>
<span class="t" style="left:965.38px;top:54.00px;font-size:11px;color:#72bf78;font-style:italic;letter-spacing:-0.398px;">1</span>
<span class="t" style="left:1053.95px;top:54.00px;font-size:11px;color:#333;font-style:italic;letter-spacing:-0.398px;">89</span>
<span class="t" style="left:1153.64px;top:53.00px;font-size:12px;color:#5a5a5a;">89</span>
<span class="t" style="left:1279.38px;top:54.00px;font-size:11px;color:#72bf78;font-style:italic;letter-spacing:-0.398px;">1</span>
<span class="t" style="left:1362.24px;top:54.00px;font-size:11px;color:#333;font-style:italic;letter-spacing:-0.398px;">152</span>
<span class="t" style="left:1460.97px;top:53.00px;font-size:12px;color:#5a5a5a;">153</span>
<span class="t" style="left:1593.38px;top:54.00px;font-size:11px;color:#72bf78;font-style:italic;letter-spacing:-0.398px;">1</span>
<span class="t" style="left:13.20px;top:77.00px;font-size:11px;color:#3a3a3a;font-style:italic;letter-spacing:-0.168px;">Discount on rental income</span>
<span class="t" style="left:422.58px;top:77.00px;font-size:11px;color:#333;font-style:italic;letter-spacing:-0.345px;">-96</span>
<span class="t" style="left:521.66px;top:76.00px;font-size:12px;color:#5a5a5a;">-97</span>
<span class="t" style="left:648.04px;top:77.00px;font-size:11px;color:#c2566a;font-style:italic;letter-spacing:-0.318px;">-1</span>
<span class="t" style="left:736.58px;top:77.00px;font-size:11px;color:#333;font-style:italic;letter-spacing:-0.345px;">-42</span>
<span class="t" style="left:835.66px;top:76.00px;font-size:12px;color:#5a5a5a;">-42</span>
<span class="t" style="left:965.38px;top:77.00px;font-size:11px;color:#c2566a;font-style:italic;letter-spacing:-0.398px;">0</span>
<span class="t" style="left:1050.58px;top:77.00px;font-size:11px;color:#333;font-style:italic;letter-spacing:-0.345px;">-20</span>
<span class="t" style="left:1149.66px;top:76.00px;font-size:12px;color:#5a5a5a;">-21</span>
<span class="t" style="left:1279.38px;top:77.00px;font-size:11px;color:#c2566a;font-style:italic;letter-spacing:-0.398px;">0</span>
<span class="t" style="left:1364.58px;top:77.00px;font-size:11px;color:#333;font-style:italic;letter-spacing:-0.345px;">-35</span>
<span class="t" style="left:1463.66px;top:76.00px;font-size:12px;color:#5a5a5a;">-35</span>
<span class="t" style="left:1593.38px;top:77.00px;font-size:11px;color:#c2566a;font-style:italic;letter-spacing:-0.398px;">0</span>
<span class="t" style="left:13.20px;top:100.00px;font-size:11px;color:#3a3a3a;font-style:italic;letter-spacing:-0.304px;">Rendering of services</span>
<span class="t" style="left:391.69px;top:100.00px;font-size:11px;color:#333;font-style:italic;letter-spacing:-0.353px;">2,461,123</span>
<span class="t" style="left:485.61px;top:99.00px;font-size:12px;color:#5a5a5a;">2,476,748</span>
<span class="t" style="left:625.67px;top:100.00px;font-size:11px;color:#72bf78;font-style:italic;letter-spacing:-0.365px;">15,625</span>
<span class="t" style="left:705.69px;top:100.00px;font-size:11px;color:#333;font-style:italic;letter-spacing:-0.353px;">3,857,816</span>
<span class="t" style="left:799.61px;top:99.00px;font-size:12px;color:#5a5a5a;">3,882,308</span>
<span class="t" style="left:939.67px;top:100.00px;font-size:11px;color:#72bf78;font-style:italic;letter-spacing:-0.365px;">24,492</span>
<span class="t" style="left:1019.69px;top:100.00px;font-size:11px;color:#333;font-style:italic;letter-spacing:-0.353px;">2,390,640</span>
<span class="t" style="left:1113.61px;top:99.00px;font-size:12px;color:#5a5a5a;">2,405,817</span>
<span class="t" style="left:1253.67px;top:100.00px;font-size:11px;color:#72bf78;font-style:italic;letter-spacing:-0.365px;">15,178</span>
<span class="t" style="left:1333.69px;top:100.00px;font-size:11px;color:#333;font-style:italic;letter-spacing:-0.353px;">1,778,347</span>
<span class="t" style="left:1427.61px;top:99.00px;font-size:12px;color:#5a5a5a;">1,789,637</span>
<span class="t" style="left:1568.45px;top:100.00px;font-size:11px;color:#72bf78;font-style:italic;letter-spacing:-0.356px;">11,290</span>
<span class="t" style="left:13.20px;top:124.00px;font-size:11px;color:#3a3a3a;font-style:italic;letter-spacing:-0.188px;">Discount on income from services rendered (except rental income)</span>
<span class="t" style="left:422.58px;top:124.00px;font-size:11px;color:#333;font-style:italic;letter-spacing:-0.345px;">-25</span>
<span class="t" style="left:521.66px;top:123.00px;font-size:12px;color:#5a5a5a;">-25</span>
<span class="t" style="left:651.38px;top:124.00px;font-size:11px;color:#c2566a;font-style:italic;letter-spacing:-0.398px;">0</span>
<span class="t" style="left:736.58px;top:124.00px;font-size:11px;color:#333;font-style:italic;letter-spacing:-0.345px;">-18</span>
<span class="t" style="left:835.66px;top:123.00px;font-size:12px;color:#5a5a5a;">-18</span>
<span class="t" style="left:965.38px;top:124.00px;font-size:11px;color:#c2566a;font-style:italic;letter-spacing:-0.398px;">0</span>
<span class="t" style="left:1050.58px;top:124.00px;font-size:11px;color:#333;font-style:italic;letter-spacing:-0.345px;">-16</span>
<span class="t" style="left:1149.66px;top:123.00px;font-size:12px;color:#5a5a5a;">-17</span>
<span class="t" style="left:1279.38px;top:124.00px;font-size:11px;color:#c2566a;font-style:italic;letter-spacing:-0.398px;">0</span>
<span class="t" style="left:1364.58px;top:124.00px;font-size:11px;color:#333;font-style:italic;letter-spacing:-0.345px;">-20</span>
<span class="t" style="left:1463.66px;top:123.00px;font-size:12px;color:#5a5a5a;">-20</span>
<span class="t" style="left:1593.38px;top:124.00px;font-size:11px;color:#c2566a;font-style:italic;letter-spacing:-0.398px;">0</span>
<span class="t" style="left:13.20px;top:147.00px;font-size:11px;color:#3a3a3a;font-style:italic;letter-spacing:-0.211px;">Miscelleanous income</span>
<span class="t" style="left:391.69px;top:147.00px;font-size:11px;color:#333;font-style:italic;letter-spacing:-0.353px;">3,171,342</span>
<span class="t" style="left:485.61px;top:146.00px;font-size:12px;color:#5a5a5a;">1,449,290</span>
<span class="t" style="left:607.97px;top:147.00px;font-size:11px;color:#c2566a;font-style:italic;letter-spacing:-0.342px;">-1,722,052</span>
<span class="t" style="left:705.69px;top:147.00px;font-size:11px;color:#333;font-style:italic;letter-spacing:-0.353px;">4,560,178</span>
<span class="t" style="left:799.61px;top:146.00px;font-size:12px;color:#5a5a5a;">1,917,349</span>
<span class="t" style="left:921.97px;top:147.00px;font-size:11px;color:#c2566a;font-style:italic;letter-spacing:-0.342px;">-2,642,829</span>
<span class="t" style="left:1020.46px;top:147.00px;font-size:11px;color:#333;font-style:italic;letter-spacing:-0.348px;">6,025,711</span>
<span class="t" style="left:1113.61px;top:146.00px;font-size:12px;color:#5a5a5a;">2,516,254</span>
<span class="t" style="left:1235.97px;top:147.00px;font-size:11px;color:#c2566a;font-style:italic;letter-spacing:-0.342px;">-3,509,458</span>
<span class="t" style="left:1333.69px;top:147.00px;font-size:11px;color:#333;font-style:italic;letter-spacing:-0.353px;">7,583,217</span>
<span class="t" style="left:1427.61px;top:146.00px;font-size:12px;color:#5a5a5a;">3,132,494</span>
<span class="t" style="left:1549.97px;top:147.00px;font-size:11px;color:#c2566a;font-style:italic;letter-spacing:-0.342px;">-4,450,723</span>
<span class="t" style="left:12.00px;top:171.00px;font-size:11px;color:#111;font-weight:bold;letter-spacing:-0.936px;">Revenues</span>
<span class="t" style="left:391.52px;top:171.00px;font-size:11px;color:#111;font-weight:bold;letter-spacing:-0.408px;">5,997,965</span>
<span class="t" style="left:485.61px;top:170.00px;font-size:12px;color:#5a5a5a;">4,293,858</span>
<span class="t" style="left:607.94px;top:171.00px;font-size:11px;color:#cc1f2d;font-weight:bold;letter-spacing:-0.395px;">-1,704,107</span>
<span class="t" style="left:705.53px;top:171.00px;font-size:11px;color:#111;font-weight:bold;letter-spacing:-0.408px;">8,683,684</span>
<span class="t" style="left:799.61px;top:170.00px;font-size:12px;color:#5a5a5a;">6,067,035</span>
<span class="t" style="left:921.94px;top:171.00px;font-size:11px;color:#cc1f2d;font-weight:bold;letter-spacing:-0.395px;">-2,616,649</span>
<span class="t" style="left:1019.53px;top:171.00px;font-size:11px;color:#111;font-weight:bold;letter-spacing:-0.408px;">8,649,405</span>
<span class="t" style="left:1113.61px;top:170.00px;font-size:12px;color:#5a5a5a;">5,156,605</span>
<span class="t" style="left:1235.94px;top:171.00px;font-size:11px;color:#cc1f2d;font-weight:bold;letter-spacing:-0.395px;">-3,492,800</span>
<span class="t" style="left:1333.52px;top:171.00px;font-size:11px;color:#111;font-weight:bold;letter-spacing:-0.408px;">9,701,868</span>
<span class="t" style="left:1427.61px;top:170.00px;font-size:12px;color:#5a5a5a;">5,264,596</span>
<span class="t" style="left:1549.94px;top:171.00px;font-size:11px;color:#cc1f2d;font-weight:bold;letter-spacing:-0.395px;">-4,437,272</span>
<span class="t" style="left:13.20px;top:194.00px;font-size:11px;color:#3a3a3a;font-style:italic;letter-spacing:-0.254px;">Cost of goods sold - changes in Inventory</span>
<span class="t" style="left:396.83px;top:194.00px;font-size:11px;color:#333;font-style:italic;letter-spacing:-0.353px;">-357,435</span>
<span class="t" style="left:491.62px;top:193.00px;font-size:12px;color:#5a5a5a;">-276,175</span>
<span class="t" style="left:625.67px;top:194.00px;font-size:11px;color:#72bf78;font-style:italic;letter-spacing:-0.365px;">81,260</span>
<span class="t" style="left:710.83px;top:194.00px;font-size:11px;color:#333;font-style:italic;letter-spacing:-0.353px;">-316,425</span>
<span class="t" style="left:805.62px;top:193.00px;font-size:12px;color:#5a5a5a;">-244,489</span>
<span class="t" style="left:939.67px;top:194.00px;font-size:11px;color:#72bf78;font-style:italic;letter-spacing:-0.365px;">71,937</span>
<span class="t" style="left:1024.83px;top:194.00px;font-size:11px;color:#333;font-style:italic;letter-spacing:-0.353px;">-291,212</span>
<span class="t" style="left:1119.62px;top:193.00px;font-size:12px;color:#5a5a5a;">-225,007</span>
<span class="t" style="left:1253.67px;top:194.00px;font-size:11px;color:#72bf78;font-style:italic;letter-spacing:-0.365px;">66,205</span>
<span class="t" style="left:1338.83px;top:194.00px;font-size:11px;color:#333;font-style:italic;letter-spacing:-0.353px;">-331,305</span>
<span class="t" style="left:1433.62px;top:193.00px;font-size:12px;color:#5a5a5a;">-255,985</span>
<span class="t" style="left:1567.67px;top:194.00px;font-size:11px;color:#72bf78;font-style:italic;letter-spacing:-0.365px;">75,320</span>
<span class="t" style="left:13.20px;top:217.00px;font-size:11px;color:#3a3a3a;font-style:italic;letter-spacing:-0.211px;">Cost of goods sold- depreciation</span>
<span class="t" style="left:402.57px;top:217.00px;font-size:11px;color:#333;font-style:italic;letter-spacing:-0.346px;">-29,455</span>
<span class="t" style="left:498.30px;top:216.00px;font-size:12px;color:#5a5a5a;">-22,759</span>
<span class="t" style="left:631.40px;top:217.00px;font-size:11px;color:#72bf78;font-style:italic;letter-spacing:-0.358px;">6,696</span>
<span class="t" style="left:716.57px;top:217.00px;font-size:11px;color:#333;font-style:italic;letter-spacing:-0.346px;">-18,260</span>
<span class="t" style="left:812.30px;top:216.00px;font-size:12px;color:#5a5a5a;">-14,109</span>
<span class="t" style="left:945.40px;top:217.00px;font-size:11px;color:#72bf78;font-style:italic;letter-spacing:-0.358px;">4,151</span>
<span class="t" style="left:1031.33px;top:217.00px;font-size:11px;color:#333;font-style:italic;letter-spacing:-0.339px;">-11,728</span>
<span class="t" style="left:1132.97px;top:216.00px;font-size:12px;color:#5a5a5a;">-9,062</span>
<span class="t" style="left:1259.40px;top:217.00px;font-size:11px;color:#72bf78;font-style:italic;letter-spacing:-0.358px;">2,666</span>
<span class="t" style="left:1344.57px;top:217.00px;font-size:11px;color:#333;font-style:italic;letter-spacing:-0.346px;">-21,854</span>
<span class="t" style="left:1440.30px;top:216.00px;font-size:12px;color:#5a5a5a;">-16,886</span>
<span class="t" style="left:1573.40px;top:217.00px;font-size:11px;color:#72bf78;font-style:italic;letter-spacing:-0.358px;">4,968</span>
</div>
<div class="abs" style="left:1571px;top:0px;width:7px;height:224px;background:#fbfbfb;"></div>
<div class="abs" style="left:1572.500px;top:8px;width:3.500px;height:23px;border-radius:2px;background:#c6c6c6"></div>
<svg class="abs" style="left:1571px;top:0" width="7" height="6" viewBox="0 0 7 6"><path d="M1.500 4L3.500 1.800L5.500 4Z" fill="#c0c0c0"/></svg>
<svg class="abs" style="left:1571px;top:218px" width="7" height="6" viewBox="0 0 7 6"><path d="M1.500 2L3.500 4.200L5.500 2Z" fill="#c0c0c0"/></svg>
</div>
<div id="side">
<div class="abs" style="left:0px;top:0px;width:1px;height:382px;background:#e2e2e2;"></div>
<svg class="abs" style="left:8px;top:22px" width="12" height="10" viewBox="1586 176 12 10"><rect x="1587.600" y="177.900" width="7.800" height="6.600" fill="#e4e4e4" stroke="#666" stroke-width="1"/><rect x="1590.400" y="178.400" width="2.200" height="5.600" fill="#fff"/><path d="M1590.200 178V184.500M1592.800 178V184.500" stroke="#777" stroke-width="0.700"/><path d="M1587.100 178.100H1595.900" stroke="#444" stroke-width="1.400"/></svg>
<div class="abs" style="left:12.800px;top:36.500px;width:0;height:0"><span class="t" style="left:0;top:-6px;font-size:12px;color:#555;letter-spacing:-0.169px;transform-origin:0 6px;transform:rotate(90deg)">Fields</span></div>
<svg class="abs" style="left:7.700px;top:111.600px" width="12" height="12" viewBox="-6 -6 12 12"><path d="M-4.100 -3.500H4.100L1 0.200V2.600L-1.100 4.300V0.200Z" fill="none" stroke="#555" stroke-width="1.300" stroke-linejoin="round"/></svg>
<div class="abs" style="left:12.800px;top:126.500px;width:0;height:0"><span class="t" style="left:0;top:-6px;font-size:12px;color:#555;letter-spacing:0.661px;transform-origin:0 6px;transform:rotate(90deg)">Filters</span></div>
</div>
<div id="tfoot">
<div class="abs" style="left:0;top:27px;width:1600px;height:10px;background:linear-gradient(rgba(0,0,0,0) 0%,rgba(0,0,0,0.030) 50%,rgba(0,0,0,0.110) 100%)"></div>
<span class="t" style="left:22.90px;top:13.00px;font-size:12px;color:#666;letter-spacing:-0.369px;">Rows:</span>
<span class="t" style="left:57.80px;top:13.00px;font-size:12px;color:#333;letter-spacing:-0.117px;-webkit-text-stroke:0.300px #333;">93,323</span>
</div>
<div id="divider">
<div class="abs" style="left:0;top:-1px;width:1600px;height:3px;background:linear-gradient(rgba(0,0,0,0.100) 0%,#d6dadd 50%,#e8f5fd 100%)"></div>
<div class="abs" style="left:0px;top:20px;width:1600px;height:1px;background:#d3dde3;"></div>
<svg class="abs" style="left:795px;top:7px" width="12" height="7" viewBox="795 580 12 7"><g fill="#8f969b"><rect x="796.3" y="581.2" width="1.700" height="1.600"/><rect x="799.7" y="581.2" width="1.700" height="1.600"/><rect x="803.1" y="581.2" width="1.700" height="1.600"/><rect x="796.3" y="584.0" width="1.700" height="1.600"/><rect x="799.7" y="584.0" width="1.700" height="1.600"/><rect x="803.1" y="584.0" width="1.700" height="1.600"/></g></svg>
<svg class="abs" style="left:1563px;top:6px" width="13" height="10" viewBox="0 0 13 10"><path d="M2.200 2.600L6.500 6.900L10.800 2.600" fill="none" stroke="#333" stroke-width="1.400"/></svg>
<svg class="abs" style="left:1583px;top:5px" width="13" height="12" viewBox="0 0 13 12"><path d="M2.200 1.600L10.600 10.400M10.600 1.600L2.200 10.400" fill="none" stroke="#333" stroke-width="1.300"/></svg>
</div>
<div id="charts">
<div class="abs" style="left:0px;top:0px;width:1600px;height:0.4px;background:#dcdcdc;"></div>
<div class="abs" style="left:511.5px;top:0px;width:1px;height:275px;background:#dadada;"></div>
<div class="abs" style="left:517.5px;top:0px;width:1px;height:275px;background:#dadada;"></div>
<div class="abs" style="left:0px;top:274.5px;width:512px;height:1px;background:#dadada;"></div>
<div class="abs" style="left:518px;top:274.5px;width:1082px;height:1px;background:#dadada;"></div>
<span class="t" style="left:166.50px;top:17.00px;font-size:17px;color:#444;font-weight:bold;letter-spacing:0.065px;">Revenues by Country</span>
<span class="t" style="left:978.50px;top:17.00px;font-size:17px;color:#444;font-weight:bold;letter-spacing:0.200px;">Revenues by Month</span>
<svg class="abs" style="left:0;top:0" width="512" height="275" viewBox="0 594 512 275"><path d="M259.3 697L260.7 674.3" stroke="#7fc97f" stroke-width="1.800" fill="none"/><path d="M277.5 702.7L282.8 693.3" stroke="#80d6cf" stroke-width="1.800" fill="none"/><path d="M291.9 713.3L299.3 706.1" stroke="#c4a9eb" stroke-width="1.800" fill="none"/><path d="M306.5 740.8L316.7 738.7" stroke="#6b8dd6" stroke-width="1.800" fill="none"/><path d="M302 773.3L311.3 778" stroke="#a1d884" stroke-width="1.800" fill="none"/><path d="M300.7 776.5L310 786.7" stroke="#a9a9e2" stroke-width="1.800" fill="none"/><path d="M289.2 789.9L298 807.5" stroke="#5ab9d6" stroke-width="1.800" fill="none"/><path d="M215.3 785.3L207.9 791.5" stroke="#a19dd5" stroke-width="1.800" fill="none"/><path d="M212 718L203.3 712.8" stroke="#7fc97f" stroke-width="1.800" fill="none"/><path d="M215.3 714L206 701.3" stroke="#80d6cf" stroke-width="1.800" fill="none"/><path d="M220 709.3L211.3 682.7" stroke="#c4a9eb" stroke-width="1.800" fill="none"/><path d="M228.7 703.5L221.5 661.9" stroke="#5f82d0" stroke-width="1.800" fill="none"/><path d="M253.96 697.50A52 52 0 0 1 263.00 698.18L260.58 712.99A37 37 0 0 0 254.15 712.50Z" fill="#7fc97f" stroke="#fff" stroke-width="0.900"/><path d="M263.00 698.18A52 52 0 0 1 289.19 710.67L279.21 721.87A37 37 0 0 0 260.58 712.99Z" fill="#80d6cf" stroke="#fff" stroke-width="0.900"/><path d="M289.19 710.67A52 52 0 0 1 294.43 716.08L282.94 725.72A37 37 0 0 0 279.21 721.87Z" fill="#c4a9eb" stroke="#fff" stroke-width="0.900"/><path d="M294.43 716.08A52 52 0 0 1 303.11 768.22L289.12 762.82A37 37 0 0 0 282.94 725.72Z" fill="#6b8dd6" stroke="#fff" stroke-width="0.900"/><path d="M303.11 768.22A52 52 0 0 1 299.68 775.42L286.68 767.94A37 37 0 0 0 289.12 762.82Z" fill="#a1d884" stroke="#fff" stroke-width="0.900"/><path d="M299.68 775.42A52 52 0 0 1 299.17 776.28L286.32 768.56A37 37 0 0 0 286.68 767.94Z" fill="#a9a9e2" stroke="#fff" stroke-width="0.900"/><path d="M299.17 776.28A52 52 0 0 1 275.42 797.15L269.41 783.41A37 37 0 0 0 286.32 768.56Z" fill="#5ab9d6" stroke="#fff" stroke-width="0.900"/><path d="M275.42 797.15A52 52 0 0 1 209.21 724.13L222.30 731.45A37 37 0 0 0 269.41 783.41Z" fill="#a19dd5" stroke="#fff" stroke-width="0.900"/><path d="M209.21 724.13A52 52 0 0 1 216.14 714.50L227.23 724.60A37 37 0 0 0 222.30 731.45Z" fill="#7fc97f" stroke="#fff" stroke-width="0.900"/><path d="M216.14 714.50A52 52 0 0 1 216.69 713.90L227.63 724.17A37 37 0 0 0 227.23 724.60Z" fill="#80d6cf" stroke="#fff" stroke-width="0.900"/><path d="M216.69 713.90A52 52 0 0 1 224.77 706.90L233.38 719.19A37 37 0 0 0 227.63 724.17Z" fill="#c4a9eb" stroke="#fff" stroke-width="0.900"/><path d="M224.77 706.90A52 52 0 0 1 232.30 702.53L238.73 716.08A37 37 0 0 0 233.38 719.19Z" fill="#5f82d0" stroke="#fff" stroke-width="0.900"/><path d="M232.30 702.53A52 52 0 0 1 235.29 701.22L240.86 715.15A37 37 0 0 0 238.73 716.08Z" fill="#a8dc92" stroke="#fff" stroke-width="0.900"/><path d="M235.29 701.22A52 52 0 0 1 248.44 697.87L250.22 712.76A37 37 0 0 0 240.86 715.15Z" fill="#5ab9d6" stroke="#fff" stroke-width="0.900"/><path d="M248.44 697.87A52 52 0 0 1 253.96 697.50L254.15 712.50A37 37 0 0 0 250.22 712.76Z" fill="#9b9dd8" stroke="#fff" stroke-width="0.900"/></svg>
<span class="t" style="left:260.70px;top:62.00px;font-size:13px;color:#454545;letter-spacing:0.554px;">Switzerland</span>
<span class="t" style="left:284.70px;top:82.00px;font-size:13px;color:#454545;letter-spacing:0.691px;">Italy</span>
<span class="t" style="left:302.70px;top:102.00px;font-size:13px;color:#454545;letter-spacing:0.472px;">Netherlands</span>
<span class="t" style="left:320.20px;top:137.00px;font-size:13px;color:#454545;letter-spacing:0.536px;">United Kingdom</span>
<span class="t" style="left:314.60px;top:178.00px;font-size:13px;color:#454545;letter-spacing:0.447px;">Germany</span>
<span class="t" style="left:311.80px;top:197.00px;font-size:13px;color:#454545;letter-spacing:0.230px;">Spain</span>
<span class="t" style="left:299.30px;top:218.00px;font-size:13px;color:#454545;letter-spacing:0.089px;">France</span>
<span class="t" style="left:160.50px;top:192.00px;font-size:13px;color:#454545;letter-spacing:0.237px;">Finland</span>
<span class="t" style="left:150.50px;top:109.00px;font-size:13px;color:#454545;letter-spacing:0.433px;">Belgium</span>
<span class="t" style="left:156.30px;top:90.00px;font-size:13px;color:#454545;letter-spacing:0.303px;">Sweden</span>
<span class="t" style="left:147.80px;top:71.00px;font-size:13px;color:#454545;letter-spacing:0.413px;">Singapore</span>
<span class="t" style="left:189.60px;top:51.00px;font-size:13px;color:#454545;letter-spacing:0.559px;">India</span>
<svg class="abs" style="left:518px;top:0" width="1082" height="275" viewBox="518 594 1082 275"><path d="M603.500 642.500V795.300H1588.500" fill="none" stroke="#e3e3e3" stroke-width="1.100"/><path d="M603.500 718.8H1588.500" stroke="#e6e6e6" stroke-width="1"/><rect x="616.7" y="716" width="26" height="2.8" fill="#88c97c"/><rect x="645.7" y="718.8" width="26" height="2.2" fill="#80d5d0"/><rect x="698.8" y="705" width="26" height="13.8" fill="#88c97c"/><rect x="727.8" y="713" width="26" height="5.8" fill="#80d5d0"/><rect x="780.9" y="706" width="26" height="12.8" fill="#88c97c"/><rect x="809.9" y="716" width="26" height="2.8" fill="#80d5d0"/><rect x="863.0" y="708" width="26" height="10.8" fill="#88c97c"/><rect x="892.0" y="718.8" width="26" height="1.2" fill="#80d5d0"/><rect x="945.1" y="694.5" width="26" height="24.3" fill="#88c97c"/><rect x="974.1" y="711.5" width="26" height="7.3" fill="#80d5d0"/><rect x="1027.2" y="709.5" width="26" height="9.3" fill="#88c97c"/><rect x="1056.2" y="712" width="26" height="6.8" fill="#80d5d0"/><rect x="1109.3" y="694.5" width="26" height="24.3" fill="#88c97c"/><rect x="1138.3" y="717" width="26" height="1.8" fill="#80d5d0"/><rect x="1191.4" y="688.5" width="26" height="30.3" fill="#88c97c"/><rect x="1220.4" y="715.5" width="26" height="3.3" fill="#80d5d0"/><rect x="1273.5" y="681" width="26" height="37.8" fill="#88c97c"/><rect x="1302.5" y="710.5" width="26" height="8.3" fill="#80d5d0"/><rect x="1355.6" y="679.5" width="26" height="39.3" fill="#88c97c"/><rect x="1384.6" y="711.5" width="26" height="7.3" fill="#80d5d0"/><rect x="1437.7" y="674.5" width="26" height="44.3" fill="#88c97c"/><rect x="1466.7" y="709" width="26" height="9.8" fill="#80d5d0"/><rect x="1519.8" y="671" width="26" height="47.8" fill="#88c97c"/><rect x="1548.8" y="708" width="26" height="10.8" fill="#80d5d0"/><path d="M643.5 719.1L725.6 719.1L807.7 719.1L889.8 719.1L971.9 719.1L1054.0 670.5L1136.1 719.1L1218.2 719.1L1300.3 719.1L1382.4 719.1L1464.5 719.1L1546.6 719.1" fill="none" stroke="#c3a9ec" stroke-width="1.900" stroke-linejoin="round"/><circle cx="643.5" cy="719.1" r="3.300" fill="#c3a9ec"/><circle cx="725.6" cy="719.1" r="3.300" fill="#c3a9ec"/><circle cx="807.7" cy="719.1" r="3.300" fill="#c3a9ec"/><circle cx="889.8" cy="719.1" r="3.300" fill="#c3a9ec"/><circle cx="971.9" cy="719.1" r="3.300" fill="#c3a9ec"/><circle cx="1054.0" cy="670.5" r="3.300" fill="#c3a9ec"/><circle cx="1136.1" cy="719.1" r="3.300" fill="#c3a9ec"/><circle cx="1218.2" cy="719.1" r="3.300" fill="#c3a9ec"/><circle cx="1300.3" cy="719.1" r="3.300" fill="#c3a9ec"/><circle cx="1382.4" cy="719.1" r="3.300" fill="#c3a9ec"/><circle cx="1464.5" cy="719.1" r="3.300" fill="#c3a9ec"/><circle cx="1546.6" cy="719.1" r="3.300" fill="#c3a9ec"/><rect x="944.400" y="838.700" width="13.400" height="13.400" fill="#88c97c"/><rect x="1024.900" y="838.700" width="13.400" height="13.400" fill="#80d5d0"/><path d="M1088.600 845.200H1114.800" stroke="#c3a9ec" stroke-width="2"/><circle cx="1101.400" cy="845.200" r="6.700" fill="#c3a9ec"/></svg>
<span class="t" style="left:536.15px;top:43.00px;font-size:12.5px;color:#444;letter-spacing:-0.253px;">200000000</span>
<span class="t" style="left:589.75px;top:118.00px;font-size:12.5px;color:#444;letter-spacing:-0.453px;">0</span>
<span class="t" style="left:532.16px;top:193.00px;font-size:12.5px;color:#444;letter-spacing:-0.243px;">-200000000</span>
<span class="t" style="left:626.41px;top:211.00px;font-size:12.5px;color:#444;letter-spacing:-0.589px;">Jan.25</span>
<span class="t" style="left:707.14px;top:211.00px;font-size:12.5px;color:#444;letter-spacing:-0.320px;">Feb.25</span>
<span class="t" style="left:788.47px;top:211.00px;font-size:12.5px;color:#444;letter-spacing:0.130px;">Mar.25</span>
<span class="t" style="left:871.78px;top:211.00px;font-size:12.5px;color:#444;letter-spacing:0.060px;">Apr.25</span>
<span class="t" style="left:952.30px;top:211.00px;font-size:12.5px;color:#444;letter-spacing:-0.096px;">May.25</span>
<span class="t" style="left:1036.49px;top:211.00px;font-size:12.5px;color:#444;letter-spacing:-0.422px;">Jun.25</span>
<span class="t" style="left:1121.02px;top:211.00px;font-size:12.5px;color:#444;letter-spacing:-0.560px;">Jul.25</span>
<span class="t" style="left:1199.26px;top:211.00px;font-size:12.5px;color:#444;letter-spacing:-0.271px;">Aug.25</span>
<span class="t" style="left:1281.57px;top:211.00px;font-size:12.5px;color:#444;letter-spacing:-0.354px;">Sep.25</span>
<span class="t" style="left:1364.74px;top:211.00px;font-size:12.5px;color:#444;letter-spacing:-0.221px;">Oct.25</span>
<span class="t" style="left:1445.43px;top:211.00px;font-size:12.5px;color:#444;letter-spacing:-0.031px;">Nov.25</span>
<span class="t" style="left:1527.87px;top:211.00px;font-size:12.5px;color:#444;letter-spacing:-0.352px;">Dec.25</span>
<span class="t" style="left:971.00px;top:246.00px;font-size:12.5px;color:#666;letter-spacing:-0.208px;">Actual</span>
<span class="t" style="left:1051.80px;top:246.00px;font-size:12.5px;color:#666;letter-spacing:-0.508px;">Plan</span>
<span class="t" style="left:1121.50px;top:246.00px;font-size:12.5px;color:#666;letter-spacing:-0.350px;">Variance %</span>
</div>
<div id="tabs">
<svg class="abs" style="left:7px;top:7px" width="15" height="14" viewBox="0 0 15 14"><g fill="none" stroke="#333" stroke-width="1.200"><path d="M1.300 1.500V12.300H13.800"/><path d="M4.300 10V7.500M7.300 10V8.500M10.300 6V3M13 6V2" stroke-width="1.300"/></g></svg>
<span class="t" style="left:31.00px;top:7.00px;font-size:13px;color:#2f2f2f;font-weight:bold;letter-spacing:-0.507px;">Actuals P&amp;L</span>
<svg class="abs" style="left:120px;top:7px" width="15" height="14" viewBox="0 0 15 14"><g fill="none" stroke="#333" stroke-width="1.200"><path d="M1.300 1.500V12.300H13.800"/><path d="M4.300 10V7.500M7.300 10V8.500M10.300 6V3M13 6V2" stroke-width="1.300"/></g></svg>
<span class="t" style="left:144.50px;top:7.00px;font-size:13px;color:#2f2f2f;font-weight:bold;letter-spacing:-0.447px;">Plan P&amp;L</span>
<svg class="abs" style="left:215.5px;top:7px" width="15" height="14" viewBox="0 0 15 14"><g fill="none" stroke="#333" stroke-width="1.200"><path d="M1.300 1.500V12.300H13.800"/><path d="M4.300 10.500V6.500M7.300 10.500V3.500M10.300 10.500V5.500M13 10.500V2.500" stroke-width="1.300"/></g></svg>
<span class="t" style="left:240.00px;top:7.00px;font-size:13px;color:#2f2f2f;font-weight:bold;letter-spacing:-0.165px;">Net Profit/Loss</span>
<div class="abs" style="left:0px;top:27px;width:1600px;height:1.5px;background:#c8c8c8;"></div>
</div>
<div class="abs" style="left:0px;top:529px;width:1578px;height:7px;background:#fff;"></div>
<div class="abs" style="left:0px;top:535px;width:1600px;height:1px;background:#e3e3e3;"></div>
<div class="abs" style="left:5.500px;top:530.300px;width:732.500px;height:3.900px;border-radius:2px;background:#c6c6c6"></div>
<svg class="abs" style="left:0;top:529px" width="6" height="7" viewBox="0 0 6 7"><path d="M4 1.500L1.800 3.500L4 5.500Z" fill="#c0c0c0"/></svg>
<svg class="abs" style="left:1564px;top:529px" width="6" height="7" viewBox="0 0 6 7"><path d="M2 1.500L4.200 3.500L2 5.500Z" fill="#c0c0c0"/></svg><svg class="abs" style="left:804px;top:586px" width="16" height="22" viewBox="0 0 16 22"><path d="M2.400 2.300V16.400L5.800 13.500L7.900 18.300L10 17.400L7.900 12.700H12.300Z" fill="#fff" stroke="#333" stroke-width="1.100" stroke-linejoin="round"/></svg>
</div>
</body>
</html>
